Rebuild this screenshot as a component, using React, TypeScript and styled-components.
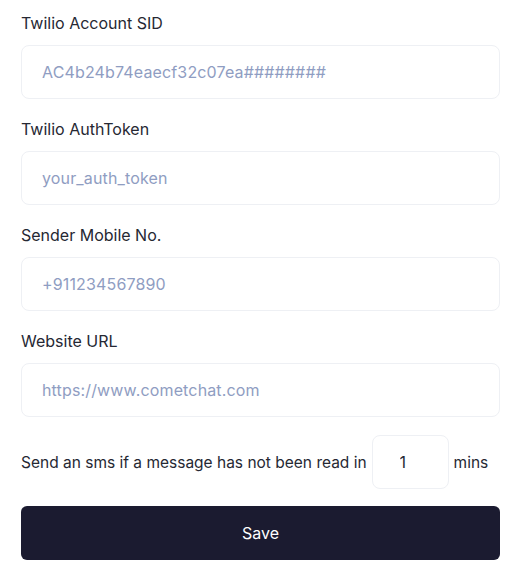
import styled, { createGlobalStyle } from "styled-components";

const GlobalStyle = createGlobalStyle`
  body {
    margin: 0;
    background: #fff;
    font-family: Inter, "Noto Sans", sans-serif;
  }
`;

const Form = styled.form`
  display: flex;
  flex-direction: column;
  padding: 11px 21px 0 21px;
  width: 479px;
`;

const Field = styled.div`
  display: flex;
  flex-direction: column;
  gap: 10px;
  margin-bottom: 18px;
`;

const Label = styled.label`
  font-size: 16px;
  line-height: 24px;
  color: #262833;
`;

const Input = styled.input<{ $small?: boolean }>`
  box-sizing: border-box;
  flex-shrink: 0;
  height: 54px;
  width: ${(p) => (p.$small ? "77px" : "100%")};
  border: 1px solid #eef0f4;
  border-radius: 8px;
  padding: 0 ${(p) => (p.$small ? "10px 0 27px" : "20px")};
  font-family: Inter, "Noto Sans", sans-serif;
  font-size: 16px;
  letter-spacing: 0.15px;
  color: #262833;
  outline: none;
  &::placeholder {
    color: #8f9dc2;
  }
`;

const DelayRow = styled.div`
  display: flex;
  align-items: center;
  gap: 5px;
  margin-bottom: 17px;
  font-size: 15.5px;
  color: #262833;
  white-space: nowrap;
`;

const SaveButton = styled.button`
  height: 54px;
  width: 100%;
  border: none;
  border-radius: 6px;
  background: #1b1b30;
  color: #fff;
  font-family: Inter, "Noto Sans", sans-serif;
  font-size: 16px;
  cursor: pointer;
`;

const fields = [
  { label: "Twilio Account SID", placeholder: "AC4b24b74eaecf32c07ea########" },
  { label: "Twilio AuthToken", placeholder: "your_auth_token" },
  { label: "Sender Mobile No.", placeholder: "+911234567890" },
  { label: "Website URL", placeholder: "https://www.cometchat.com" },
];

export default function App() {
  return (
    <>
      <GlobalStyle />
      <Form onSubmit={(e) => e.preventDefault()}>
        {fields.map((f) => (
          <Field key={f.label}>
            <Label>{f.label}</Label>
            <Input placeholder={f.placeholder} />
          </Field>
        ))}
        <DelayRow>
          <span>Send an sms if a message has not been read in</span>
          <Input $small defaultValue="1" />
          <span>mins</span>
        </DelayRow>
        <SaveButton type="submit">Save</SaveButton>
      </Form>
    </>
  );
}
